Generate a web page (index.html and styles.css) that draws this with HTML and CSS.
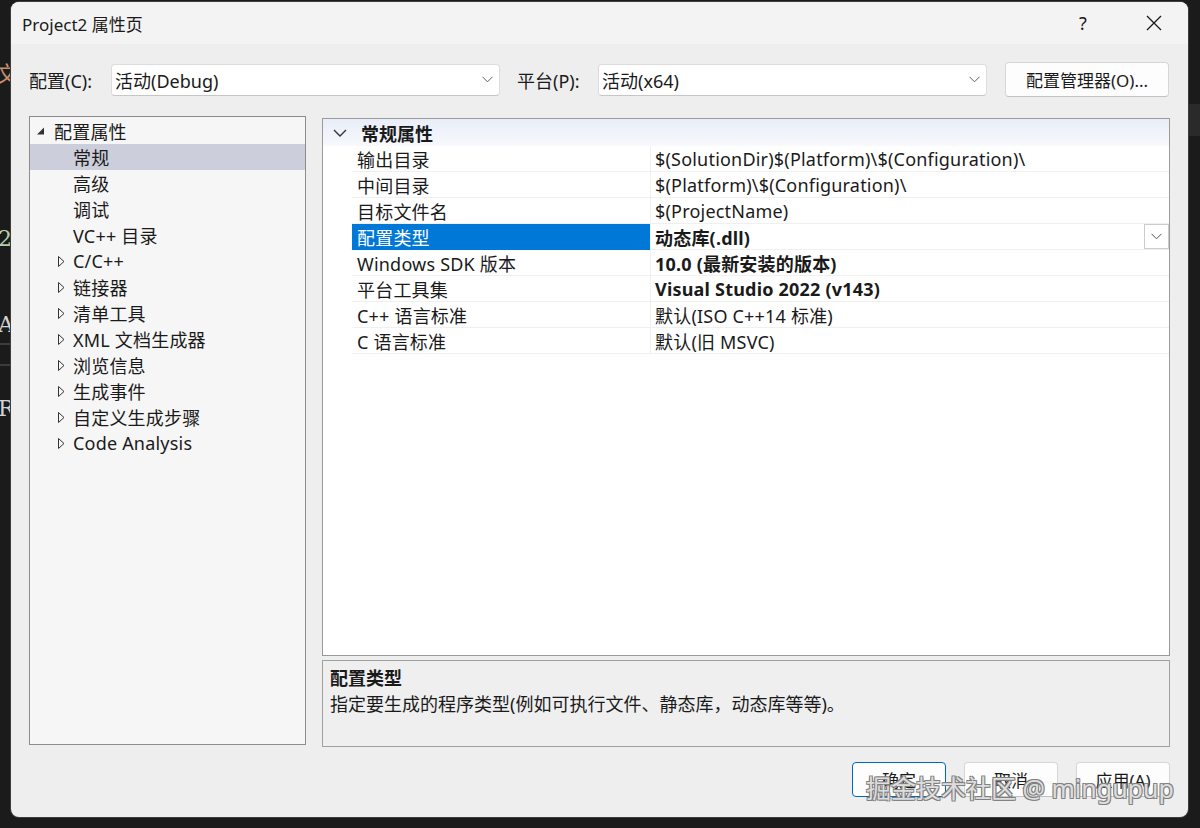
FILE: index.html
```html
<!DOCTYPE html>
<html lang="zh-CN">
<head>
    <meta charset="UTF-8">
    <title>Project2 属性页</title>
    <link rel="stylesheet" href="styles.css">
</head>
<body>
    <!-- editor text peeking out behind the dialog -->
    <div class="behind">
        <span class="frag f1">文</span>
        <span class="frag f2">2(</span>
        <span class="frag f3">AI</span>
        <span class="rule r1"></span>
        <span class="rule r2"></span>
        <span class="frag f4">RI</span>
        <span class="band"></span>
    </div>

    <div class="dialog">
        <div class="titlebar">
            <div class="title">Project2 属性页</div>
            <div class="caption help">?</div>
            <div class="caption close">
                <svg width="16" height="16" viewBox="0 0 16 16"><path d="M1 1L15 15M15 1L1 15" stroke="#1a1a1a" stroke-width="1.3" fill="none"/></svg>
            </div>
        </div>

        <div class="config-row">
            <div class="label">配置(C):</div>
            <div class="combo">
                <span>活动(Debug)</span>
                <svg class="chev" width="11" height="7" viewBox="0 0 11 7"><path d="M0.5 0.8L5.5 5.8L10.5 0.8" stroke="#606060" stroke-width="1" fill="none"/></svg>
            </div>
            <div class="label label-platform">平台(P):</div>
            <div class="combo">
                <span>活动(x64)</span>
                <svg class="chev" width="11" height="7" viewBox="0 0 11 7"><path d="M0.5 0.8L5.5 5.8L10.5 0.8" stroke="#606060" stroke-width="1" fill="none"/></svg>
            </div>
            <div class="btn btn-manager">配置管理器(O)...</div>
        </div>

        <div class="main">
            <div class="tree">
                <div class="node root">
                    <svg class="tri" width="8" height="8" viewBox="0 0 8 8"><path d="M7 0.5V7.5H0Z" fill="#333"/></svg>
                    <span>配置属性</span>
                </div>
                <div class="node child selected"><span>常规</span></div>
                <div class="node child"><span>高级</span></div>
                <div class="node child"><span>调试</span></div>
                <div class="node child"><span>VC++ 目录</span></div>
                <div class="node child folder">
                    <svg class="tri" width="7" height="11" viewBox="0 0 7 11"><path d="M0.5 0.5L6 5.5L0.5 10.5Z" stroke="#333" stroke-width="1" fill="none"/></svg>
                    <span>C/C++</span>
                </div>
                <div class="node child folder">
                    <svg class="tri" width="7" height="11" viewBox="0 0 7 11"><path d="M0.5 0.5L6 5.5L0.5 10.5Z" stroke="#333" stroke-width="1" fill="none"/></svg>
                    <span>链接器</span>
                </div>
                <div class="node child folder">
                    <svg class="tri" width="7" height="11" viewBox="0 0 7 11"><path d="M0.5 0.5L6 5.5L0.5 10.5Z" stroke="#333" stroke-width="1" fill="none"/></svg>
                    <span>清单工具</span>
                </div>
                <div class="node child folder">
                    <svg class="tri" width="7" height="11" viewBox="0 0 7 11"><path d="M0.5 0.5L6 5.5L0.5 10.5Z" stroke="#333" stroke-width="1" fill="none"/></svg>
                    <span>XML 文档生成器</span>
                </div>
                <div class="node child folder">
                    <svg class="tri" width="7" height="11" viewBox="0 0 7 11"><path d="M0.5 0.5L6 5.5L0.5 10.5Z" stroke="#333" stroke-width="1" fill="none"/></svg>
                    <span>浏览信息</span>
                </div>
                <div class="node child folder">
                    <svg class="tri" width="7" height="11" viewBox="0 0 7 11"><path d="M0.5 0.5L6 5.5L0.5 10.5Z" stroke="#333" stroke-width="1" fill="none"/></svg>
                    <span>生成事件</span>
                </div>
                <div class="node child folder">
                    <svg class="tri" width="7" height="11" viewBox="0 0 7 11"><path d="M0.5 0.5L6 5.5L0.5 10.5Z" stroke="#333" stroke-width="1" fill="none"/></svg>
                    <span>自定义生成步骤</span>
                </div>
                <div class="node child folder">
                    <svg class="tri" width="7" height="11" viewBox="0 0 7 11"><path d="M0.5 0.5L6 5.5L0.5 10.5Z" stroke="#333" stroke-width="1" fill="none"/></svg>
                    <span>Code Analysis</span>
                </div>
            </div>

            <div class="right">
                <div class="grid">
                    <div class="category">
                        <svg class="cat-chev" width="14" height="8" viewBox="0 0 14 8"><path d="M1 1L7 7L13 1" stroke="#333" stroke-width="1.4" fill="none"/></svg>
                        <span>常规属性</span>
                    </div>
                    <div class="prow">
                        <div class="gutter"></div>
                        <div class="pname">输出目录</div>
                        <div class="pval">$(SolutionDir)$(Platform)\$(Configuration)\</div>
                    </div>
                    <div class="prow">
                        <div class="gutter"></div>
                        <div class="pname">中间目录</div>
                        <div class="pval">$(Platform)\$(Configuration)\</div>
                    </div>
                    <div class="prow">
                        <div class="gutter"></div>
                        <div class="pname">目标文件名</div>
                        <div class="pval">$(ProjectName)</div>
                    </div>
                    <div class="prow">
                        <div class="gutter"></div>
                        <div class="pname sel">配置类型</div>
                        <div class="pval bold">
                            <span>动态库(.dll)</span>
                            <div class="drop">
                                <svg width="11" height="7" viewBox="0 0 11 7"><path d="M0.5 0.8L5.5 5.8L10.5 0.8" stroke="#555" stroke-width="1" fill="none"/></svg>
                            </div>
                        </div>
                    </div>
                    <div class="prow">
                        <div class="gutter"></div>
                        <div class="pname">Windows SDK 版本</div>
                        <div class="pval bold">10.0 (最新安装的版本)</div>
                    </div>
                    <div class="prow">
                        <div class="gutter"></div>
                        <div class="pname">平台工具集</div>
                        <div class="pval bold">Visual Studio 2022 (v143)</div>
                    </div>
                    <div class="prow">
                        <div class="gutter"></div>
                        <div class="pname">C++ 语言标准</div>
                        <div class="pval">默认(ISO C++14 标准)</div>
                    </div>
                    <div class="prow">
                        <div class="gutter"></div>
                        <div class="pname">C 语言标准</div>
                        <div class="pval">默认(旧 MSVC)</div>
                    </div>
                </div>
                <div class="desc">
                    <div class="desc-title">配置类型</div>
                    <div class="desc-text">指定要生成的程序类型(例如可执行文件、静态库，动态库等等)。</div>
                </div>
            </div>
        </div>

        <div class="buttons">
            <div class="btn btn-action default">确定</div>
            <div class="btn btn-action">取消</div>
            <div class="btn btn-action">应用(A)</div>
        </div>
    </div>

    <div class="watermark">掘金技术社区 @ mingupup</div>
</body>
</html>
```

FILE: styles.css
```css
body {
    margin: 0;
    width: 1200px;
    height: 828px;
    overflow: hidden;
    position: relative;
    background: #1b1b1b;
    font-family: "Noto Sans", "Noto Sans CJK SC", sans-serif;
    font-size: 18px;
    color: #1a1a1a;
}

/* code editor behind the window */
.behind .frag {
    position: absolute;
    left: -4px;
    font-family: "DejaVu Serif", serif;
    font-size: 22px;
}
.f1 { top: 56px; color: #c9906c; }
.f2 { top: 226px; left: -2px !important; color: #b5cea8; }
.f3 { top: 312px; left: -2px !important; color: #d4d4d4; }
.f4 { top: 396px; left: -2px !important; color: #d4d4d4; }
.behind .rule {
    position: absolute;
    left: 0;
    width: 12px;
    height: 2px;
    background: #3c3c3c;
}
.r1 { top: 343px; }
.r2 { top: 364px; }
.behind .band {
    position: absolute;
    right: 0;
    top: 104px;
    width: 12px;
    height: 32px;
    background: #2a2a2a;
}

.dialog {
    position: relative;
    z-index: 1;
    margin: 2px 0 0 11px;
    width: 1177px;
    height: 815px;
    background: #eeeeee;
    border-radius: 8px;
    box-shadow: 0 0 0 1px #3d3d3d;
    display: flex;
    flex-direction: column;
}

.titlebar {
    height: 42px;
    display: flex;
    align-items: center;
    padding-left: 11px;
    background: #f3f3f3;
    border-radius: 8px 8px 0 0;
}
.title {
    flex: 1;
    font-size: 17px;
}
.caption {
    width: 46px;
    height: 42px;
    display: flex;
    align-items: center;
    justify-content: center;
}
.help {
    margin-right: 25px;
    font-size: 18px;
}
.close {
    margin-right: 11px;
}

.config-row {
    display: flex;
    align-items: center;
    height: 35px;
    margin: 18px 18px 0;
}
.label {
    width: 82px;
    flex-shrink: 0;
}
.label-platform {
    width: 81px;
    margin-left: 17px;
}
.combo {
    width: 389px;
    height: 32px;
    box-sizing: border-box;
    display: flex;
    align-items: center;
    justify-content: space-between;
    padding: 0 6px 0 3px;
    background: #ffffff;
    border: 1px solid #dddddd;
    border-bottom-color: #c6c6c6;
    border-radius: 4px;
}
.btn {
    height: 35px;
    box-sizing: border-box;
    display: flex;
    align-items: center;
    justify-content: center;
    background: #fdfdfd;
    border: 1px solid #d6d6d6;
    border-bottom-color: #c2c2c2;
    border-radius: 4px;
    font-size: 17px;
}
.btn-manager {
    width: 164px;
    margin-left: 18px;
}

.main {
    display: flex;
    gap: 16px;
    margin: 19px 18px 0;
    height: 631px;
}

.tree {
    width: 277px;
    height: 629px;
    box-sizing: border-box;
    padding-top: 1px;
    background: #f6f6f6;
    border: 1px solid #8c8c8c;
}
.node {
    height: 26px;
    display: flex;
    align-items: center;
    position: relative;
    letter-spacing: 0.2px;
}
.node.root {
    padding-left: 24px;
}
.node.root .tri {
    position: absolute;
    left: 7px;
    top: 9px;
}
.node.child {
    padding-left: 43px;
}
.node.folder .tri {
    position: absolute;
    left: 28px;
    top: 8px;
}
.node.selected {
    background: #cdcedb;
}

.right {
    flex: 1;
    display: flex;
    flex-direction: column;
    gap: 4px;
    padding-top: 2px;
}

.grid {
    height: 538px;
    box-sizing: border-box;
    background: #ffffff;
    border: 1px solid #9a9a9a;
}
.category {
    height: 27px;
    display: flex;
    align-items: center;
    background: linear-gradient(#e8edf8, #f7f9fd);
    font-weight: 700;
}
.cat-chev {
    margin: 0 14px 0 10px;
}
.prow {
    display: flex;
    height: 26px;
}
.gutter {
    width: 29px;
    flex-shrink: 0;
}
.pname,
.pval {
    box-sizing: border-box;
    height: 26px;
    display: flex;
    align-items: center;
    border-bottom: 1px solid #f0f0f0;
    white-space: nowrap;
    letter-spacing: 0.2px;
}
.pname {
    width: 298px;
    padding-left: 5px;
}
.pname.sel {
    background: #0078d7;
    color: #ffffff;
    border-bottom-color: #0078d7;
}
.pval {
    flex: 1;
    padding-left: 4px;
    border-left: 1px solid #f0f0f0;
    justify-content: space-between;
}
.pval.bold {
    font-weight: 700;
}
.drop {
    width: 25px;
    height: 25px;
    box-sizing: border-box;
    display: flex;
    align-items: center;
    justify-content: center;
    border: 1px solid #cccccc;
    background: #ffffff;
}

.desc {
    height: 87px;
    box-sizing: border-box;
    padding: 4px 7px;
    background: #efefef;
    border: 1px solid #a0a0a0;
    line-height: 26px;
}
.desc-title {
    font-weight: 700;
}

.buttons {
    display: flex;
    justify-content: flex-end;
    gap: 18px;
    margin: 15px 18px 0;
}
.btn-action {
    width: 94px;
}
.btn-action.default {
    border: 1px solid #0067c0;
}

.watermark {
    position: absolute;
    z-index: 2;
    left: 866px;
    top: 769px;
    font-size: 25px;
    color: rgba(248, 248, 248, 0.8);
    text-shadow: 1px 1px 0 #808080, -1px -1px 0 #808080, 1px -1px 0 #808080, -1px 1px 0 #808080;
    white-space: nowrap;
}
```
